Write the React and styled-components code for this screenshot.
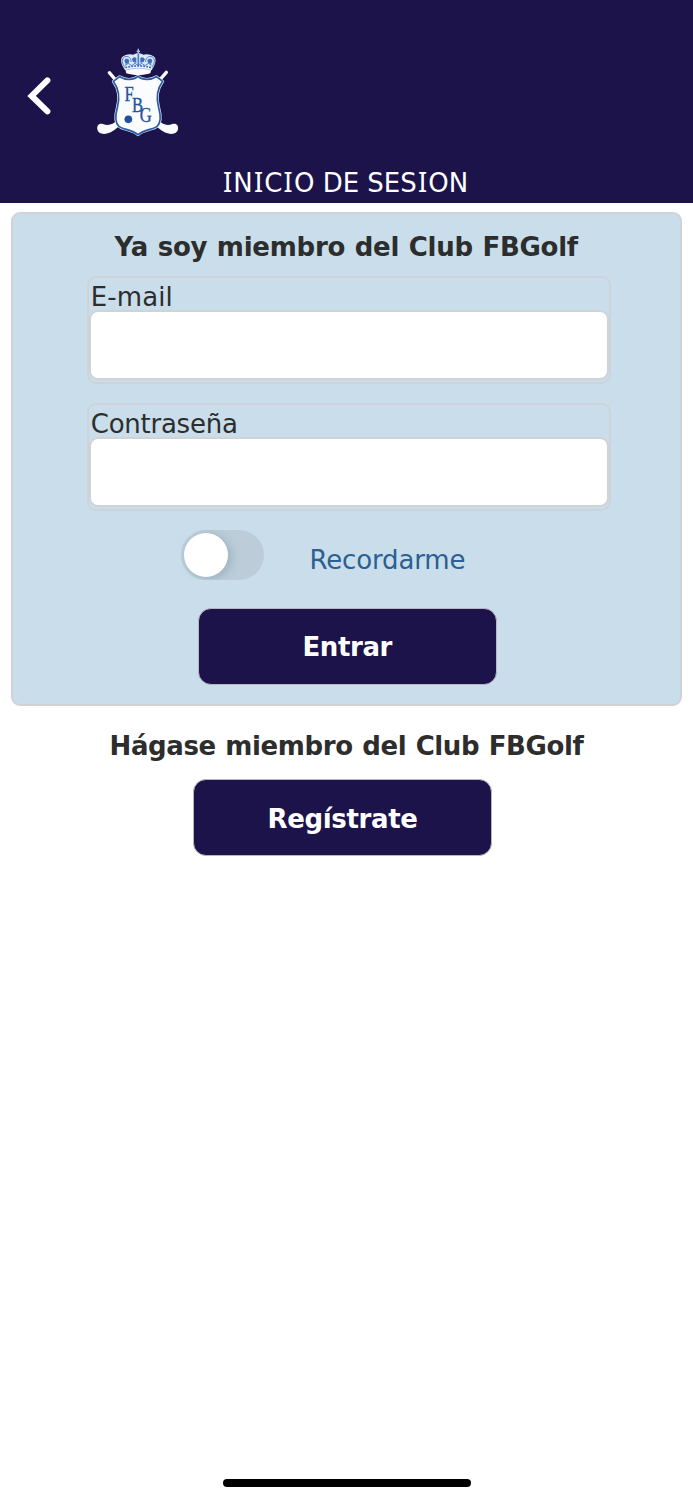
import { useState } from 'react';
import styled, { createGlobalStyle } from 'styled-components';

const SHIELD = 'M104 110 C122 121 145 121 159 109 C173 121 196 121 214 110 L233 124 C214 150 213 175 221 203 C228 228 228 248 216 259 C204 269 178 268 159 284 C140 268 114 269 102 259 C90 248 90 228 97 203 C105 175 104 150 85 124 Z';

function Crest() {
    return (
        <CrestSvg viewBox="0 0 315 315" aria-label="FBG">
            {/* clubs */}
            <g stroke="#fafbfd" strokeLinecap="round" fill="none">
                <path d="M73 98 L92 120" strokeWidth="10" />
                <path d="M244 97 L224 120" strokeWidth="10" />
            </g>
            <path d="M96 240 C84 254 70 258 54 252 C42 248 35 256 37 268 C39 281 54 284 68 280 C84 276 92 266 102 259 Z" fill="#fafbfd" />
            <path d="M220 240 C234 254 246 258 262 252 C274 248 281 256 279 268 C277 281 262 284 248 280 C232 276 224 266 214 259 Z" fill="#fafbfd" />
            {/* shield */}
            <path d={SHIELD} fill="#fbfcfe" stroke="#dfe8f5" strokeWidth="9" strokeLinejoin="round" />
            <path d={SHIELD} fill="#fbfcfe" stroke="#2a5ba8" strokeWidth="5" strokeLinejoin="round" />
            <CrestLetters transform="scale(0.83 1)">
                <tspan x="143" y="183">F</tspan>
                <tspan x="170" y="217">B</tspan>
                <tspan x="198" y="246">G</tspan>
            </CrestLetters>
            <circle cx="130" cy="238" r="11.5" fill="#1f4f9f" />
            {/* crown */}
            <path d="M120 90 C110 76 105 62 111 52 C119 42 136 41 146 44 C150 38 170 38 174 44 C184 41 201 42 209 52 C215 62 210 76 200 90 Z" fill="#dce8f6" />
            <g fill="#3f6fb7">
                <path d="M118 62 C120 55 128 55 133 61 L131 69 L122 72 Z" />
                <path d="M202 62 C200 55 192 55 187 61 L189 69 L198 72 Z" />
                <path d="M141 58 C143 51 150 50 154 54 L154 68 L144 66 Z" />
                <path d="M179 58 C177 51 170 50 166 54 L166 68 L176 66 Z" />
            </g>
            <g fill="none" stroke="#4f7dc0" strokeWidth="3">
                <path d="M121 84 C111 71 108 57 118 51 C130 46 139 54 138 66" />
                <path d="M199 84 C209 71 212 57 202 51 C190 46 181 54 182 66" />
                <path d="M160 30 L160 78" strokeWidth="5" />
                <path d="M120 76 L130 70 L140 77 L150 70 L160 77 L170 70 L180 77 L190 70 L200 76" />
            </g>
            <path d="M119 80 C144 74 176 74 201 80 L196 100 C174 107 146 107 124 100 Z" fill="#fff" />
            <path d="M121 83 C146 76 174 76 199 83" fill="none" stroke="#3b6db5" strokeWidth="5" strokeDasharray="6 3" />
            <path d="M123 90 C146 83 174 83 197 90" fill="none" stroke="#7da0d2" strokeWidth="2" />
            <path d="M160 26 V42 M155 34 H165" stroke="#a9c1e2" strokeWidth="4" />
        </CrestSvg>
    );
}

function App() {
    const [remember, setRemember] = useState(false);

    return (
        <Page>
            <GlobalStyle />
            <Header>
                <HeaderBar>
                    <BackButton aria-label="Volver">
                        <svg width="30" height="44" viewBox="0 0 30 44">
                            <path d="M22.4 6.4 L6.6 21.9 L22.4 37.4" fill="none" stroke="#fff" strokeWidth="6" strokeLinejoin="miter" strokeLinecap="round" />
                        </svg>
                    </BackButton>
                    <Crest />
                </HeaderBar>
                <HeaderTitle>
                    <CapI>I</CapI>N<CapI>I</CapI>C<CapI>I</CapI>O DE SES<CapI>I</CapI>ON
                </HeaderTitle>
            </Header>

            <LoginCard>
                <Heading $tracking="-0.25px">Ya soy miembro del Club FBGolf</Heading>
                <Field>
                    <Label htmlFor="email" $tracking="0.1px">E-mail</Label>
                    <Input id="email" type="email" />
                </Field>
                <Field>
                    <Label htmlFor="password" $tracking="-0.25px">Contraseña</Label>
                    <Input id="password" type="password" />
                </Field>
                <RememberRow>
                    <Switch role="switch" aria-checked={remember} $on={remember} onClick={() => setRemember(!remember)}>
                        <Knob />
                    </Switch>
                    <RememberText>Recordarme</RememberText>
                </RememberRow>
                <Button $tracking="-0.4px">Entrar</Button>
            </LoginCard>

            <Register>
                <Heading $tracking="-0.38px">Hágase miembro del Club FBGolf</Heading>
                <Button $tracking="-0.35px">Regístrate</Button>
            </Register>

            <HomeIndicator />
        </Page>
    );
}

export default App;


const GlobalStyle = createGlobalStyle`
    * {
        box-sizing: border-box;
    }
    body {
        margin: 0;
        background-color: #fff;
        font-family: Verdana, 'DejaVu Sans', sans-serif;
        font-size: 26px;
        line-height: 30px;
        color: #2d2d2d;
    }
    button, input {
        font: inherit;
        padding: 0;
        border: none;
    }
`;

const Page = styled.div`
    display: flex;
    flex-direction: column;
    width: 693px;
    height: 1500px;
`;

const Header = styled.header`
    height: 202.5px;
    padding-top: 40px;
    background-color: #1c134b;
    color: #fff;
`;

const HeaderBar = styled.div`
    display: flex;
    height: 127.5px;
    padding-left: 25px;
`;

const BackButton = styled.button`
    display: flex;
    width: 60px;
    height: 44px;
    margin-top: 34px;
    background: none;
`;

const CrestSvg = styled.svg`
    width: 105px;
    height: 105px;
`;

const CrestLetters = styled.text`
    font-family: 'Liberation Serif', serif;
    font-size: 60px;
    fill: #24549f;
    stroke: #24549f;
    stroke-width: 1px;
`;

const HeaderTitle = styled.div`
    padding-right: 3px;
    text-align: center;
    white-space: nowrap;
`;

const CapI = styled.span`
    font-family: 'Noto Sans', sans-serif;
    font-size: 27px;
    line-height: 1;
    margin: 0 1.2px;
`;

const LoginCard = styled.section`
    display: flex;
    flex-direction: column;
    align-items: center;
    width: 671.5px;
    height: 494px;
    margin: 9px 0 0 10.5px;
    padding-top: 18px;
    background-color: #c9deea;
    border: 2px solid #d0d2d5;
    border-radius: 9px;
`;

const Heading = styled.h2`
    margin: 0;
    font-size: 26px;
    font-weight: bold;
    line-height: 30px;
    letter-spacing: ${props => props.$tracking};
    word-spacing: 0.8px;
    white-space: nowrap;
`;

const Field = styled.div`
    width: 524px;
    height: 108px;
    margin: 14px 0 5px 5px;
    padding: 4px 0 0;
    border: 2px solid #ccd4da;
    border-radius: 9px;
`;

const Label = styled.label`
    display: block;
    height: 28px;
    padding-left: 2px;
    letter-spacing: ${props => props.$tracking};
`;

const Input = styled.input`
    display: block;
    width: 520px;
    height: 70px;
    padding: 0 10px;
    background-color: #fff;
    border: 2px solid #d0d3d6;
    border-radius: 9px;
    outline: none;
`;

const RememberRow = styled.div`
    display: flex;
    align-self: flex-start;
    margin: 14px 0 0 168.5px;
`;

const Switch = styled.button`
    display: flex;
    justify-content: ${props => props.$on ? 'flex-end' : 'flex-start'};
    width: 83px;
    height: 50px;
    padding: 3px;
    border-radius: 25px;
    background-color: ${props => props.$on ? '#8fb3cc' : '#bccdd9'};
`;

const Knob = styled.span`
    width: 44px;
    height: 44px;
    border-radius: 50%;
    background-color: #fff;
    box-shadow: 3px 2px 8px rgba(60, 90, 120, 0.25);
    clip-path: inset(-3px -16px -3px -3px);
`;

const RememberText = styled.span`
    margin: 15px 0 0 45.5px;
    color: #2a6093;
    letter-spacing: -0.15px;
`;

const Button = styled.button`
    width: 299px;
    height: 77px;
    margin: 28px 0 0 2px;
    padding-top: 2px;
    background-color: #1c134b;
    border: 1px solid #b9b4c0;
    border-radius: 13px;
    color: #fff;
    font-weight: bold;
    letter-spacing: ${props => props.$tracking};
`;

const Register = styled.section`
    display: flex;
    flex-direction: column;
    align-items: center;
    padding-top: 25px;

    & ${Button} {
        margin: 18.5px 8px 0 0;
    }
`;

const HomeIndicator = styled.div`
    width: 248px;
    height: 8px;
    margin: auto auto 13px;
    border-radius: 4px;
    background-color: #000;
`;
